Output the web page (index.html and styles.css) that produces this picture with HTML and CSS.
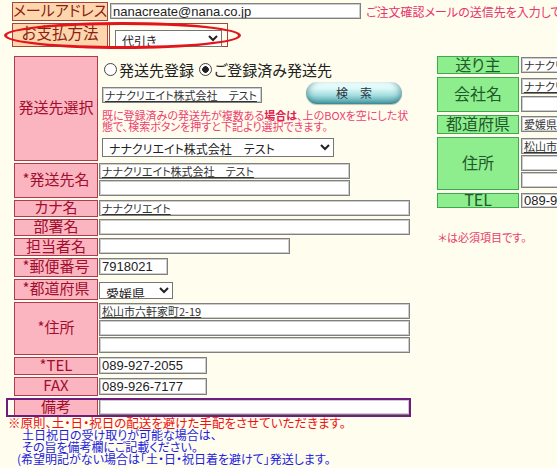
FILE: index.html
```html
<!DOCTYPE html>
<html lang="ja">
<head>
<meta charset="utf-8">
<title>ご注文情報入力</title>
<link rel="stylesheet" href="styles.css">
</head>
<body>
<div class="page">
  <div class="top">
    <div class="toprow r1">
      <div class="tlabel">メールアドレス</div>
      <input class="inp email" type="text" value="nanacreate@nana.co.jp">
      <span class="notice">ご注文確認メールの送信先を入力してください。</span>
    </div>
    <div class="toprow r2">
      <div class="tlabel tall">お支払方法</div>
      <div class="tcell"><select class="sel pay"><option>代引き</option></select></div>
      <div class="ellipse"></div>
    </div>
  </div>

  <div class="main">
    <div class="left">
      <div class="lgrid">
        <div class="plabel">発送先選択</div>
        <div class="cell choose">
          <div class="radios">
            <span class="radio"></span><span class="rtext">発送先登録</span>
            <span class="radio on"></span><span class="rtext">ご登録済み発送先</span>
          </div>
          <div class="searchrow">
            <input class="inp jp ul w160" type="text" value="ナナクリエイト株式会社　テスト">
            <button class="search" type="button">検　索</button>
          </div>
          <p class="hint">既に登録済みの発送先が複数ある<b>場合は</b>、上のBOXを空にした状<br>態で、検索ボタンを押すと下記より選択できます。</p>
          <select class="sel addr"><option>ナナクリエイト株式会社　テスト</option></select>
        </div>

        <div class="plabel">*発送先名</div>
        <div class="cell stack">
          <input class="inp jp ul w251" type="text" value="ナナクリエイト株式会社　テスト">
          <input class="inp w251" type="text" value="">
        </div>

        <div class="plabel">カナ名</div>
        <div class="cell"><input class="inp jp ul w311" type="text" value="ナナクリエイト"></div>

        <div class="plabel">部署名</div>
        <div class="cell"><input class="inp w311" type="text" value=""></div>

        <div class="plabel">担当者名</div>
        <div class="cell"><input class="inp w191" type="text" value=""></div>

        <div class="plabel">*郵便番号</div>
        <div class="cell"><input class="inp w69 h17" type="text" value="7918021"></div>

        <div class="plabel">*都道府県</div>
        <div class="cell"><select class="sel pref"><option>愛媛県</option></select></div>

        <div class="plabel">*住所</div>
        <div class="cell stack addrs">
          <input class="inp jp ul w311" type="text" value="松山市六軒家町2-19">
          <input class="inp w311" type="text" value="">
          <input class="inp w311" type="text" value="">
        </div>

        <div class="plabel">*TEL</div>
        <div class="cell"><input class="inp w108 h17" type="text" value="089-927-2055"></div>

        <div class="plabel">FAX</div>
        <div class="cell"><input class="inp w108 h17 mt1" type="text" value="089-926-7177"></div>
      </div>

      <div class="bikou">
        <div class="plabel">備考</div>
        <input class="inp w311" type="text" value="">
      </div>

      <div class="notes">
        <div class="red">※原則、土・日・祝日の配送を避けた手配をさせていただきます。</div>
        <div class="blue">土日祝日の受け取りが可能な場合は、</div>
        <div class="blue">その旨を備考欄にご記載ください。</div>
        <div class="blue paren">(希望明記がない場合は「土・日・祝日着を避けて」発送します。</div>
      </div>
    </div>

    <div class="right">
      <div class="rgrid">
        <div class="glabel">送り主</div>
        <div class="cell"><input class="inp jp w200 mt1" type="text" value="ナナクリエイト株式会社"></div>

        <div class="glabel">会社名</div>
        <div class="cell stack g2">
          <input class="inp jp ul w200 mt1" type="text" value="ナナクリエイト株式会社">
          <input class="inp w200" type="text" value="">
        </div>

        <div class="glabel">都道府県</div>
        <div class="cell"><input class="inp jp w200 mt1" type="text" value="愛媛県"></div>

        <div class="glabel">住所</div>
        <div class="cell stack g3">
          <input class="inp jp ul w200 mt1" type="text" value="松山市六軒家町2-19">
          <input class="inp w200" type="text" value="">
          <input class="inp w200" type="text" value="">
        </div>

        <div class="glabel">TEL</div>
        <div class="cell"><input class="inp w200 h15" type="text" value="089-927-2055"></div>
      </div>
      <p class="req">＊は必須項目です。</p>
    </div>
  </div>
</div>
</body>
</html>
```

FILE: styles.css
```css
html, body {
  margin: 0;
  padding: 0;
}
body {
  width: 557px;
  height: 468px;
  overflow: hidden;
  background: #fefdee;
  font-family: "Noto Sans CJK JP", "Liberation Sans", sans-serif;
  font-feature-settings: "palt";
  color: #222;
}
.page {
  width: 900px;
  position: relative;
}

/* ---------- top rows ---------- */
.top {
  padding: 2px 0 0 12px;
}
.toprow {
  display: flex;
  align-items: flex-start;
}
.r1 {
  height: 19px;
}
.r2 {
  margin-top: 2px;
  position: relative;
}
.tlabel {
  box-sizing: border-box;
  width: 96px;
  height: 19px;
  border: 1px solid #a8453a;
  background: #fdd6ae;
  color: #8a1f12;
  font-size: 15px;
  line-height: 1;
  display: flex;
  align-items: center;
  justify-content: center;
  padding-bottom: 4px;
  white-space: nowrap;
}
.tlabel.tall {
  height: 24px;
  font-size: 15.5px;
}
.tcell {
  box-sizing: border-box;
  width: 119px;
  height: 24px;
  margin-left: 1px;
  border: 1px solid #a8453a;
  padding: 3px 0 0 5px;
}
.ellipse {
  position: absolute;
  left: -8px;
  top: -1px;
  width: 237px;
  height: 27px;
  box-sizing: border-box;
  border: 3px solid #e4141c;
  border-radius: 50%;
  pointer-events: none;
}
.notice {
  margin-left: 5px;
  font-size: 12px;
  line-height: 19px;
  color: #e8336b;
  white-space: nowrap;
}

/* ---------- form controls ---------- */
.inp {
  box-sizing: border-box;
  height: 16px;
  margin: 0;
  padding: 0 2px;
  border: 1px solid #808080;
  box-shadow: inset 0 0 0 1px #cdcdcd;
  background: #fff;
  font-family: "Liberation Sans", "Noto Sans CJK JP", sans-serif;
  font-size: 13px;
  font-feature-settings: "palt";
  color: #222;
  outline: none;
  display: block;
}
.inp.jp {
  font-family: "Noto Sans CJK JP", sans-serif;
  font-size: 11px;
  color: #333;
}
.inp.ul {
  text-decoration: underline;
}
.email {
  width: 251px;
  margin: 1px 0 0 2px;
}
.w69 { width: 69px; }
.w108 { width: 108px; }
.w160 { width: 160px; }
.w191 { width: 191px; }
.w200 { width: 200px; }
.w251 { width: 251px; }
.w311 { width: 311px; }
.h15 { height: 15px; }
.h17 { height: 17px; }
.mt1 { margin-top: 1px; }

.sel {
  box-sizing: border-box;
  margin: 0;
  border: 1px solid #767676;
  border-radius: 0;
  background: #fff;
  color: #222;
  font-family: "Noto Sans CJK JP", sans-serif;
  font-feature-settings: "palt";
  font-size: 12px;
  padding: 0 2px;
}
.pay {
  width: 107px;
  height: 17px;
}
.addr {
  width: 232px;
  height: 19px;
  margin-top: 6px;
}
.pref {
  width: 74px;
  height: 17px;
  margin-top: 3px;
  font-size: 13px;
}

/* ---------- main area ---------- */
.main {
  display: flex;
  gap: 26px;
  margin-top: 9px;
  padding-left: 6px;
}
.left {
  width: 405px;
  position: relative;
}
.lgrid {
  margin-left: 8px;
  display: grid;
  grid-template-columns: 84px 312px;
  grid-template-rows: 105px 35px 17px 17px 18px 19px 21px 53px 18px 19px;
  column-gap: 1px;
  row-gap: 2px;
}
.plabel {
  box-sizing: border-box;
  border: 1px solid #b33a4c;
  background: #fab5c1;
  color: #a30d2d;
  font-size: 15px;
  display: flex;
  align-items: center;
  justify-content: center;
  padding-bottom: 4px;
  white-space: nowrap;
  line-height: 1;
}
.cell {
  display: flex;
  flex-direction: column;
  align-items: flex-start;
}
.stack {
  gap: 1px;
}
.addrs {
  gap: 1px;
  padding-top: 1px;
}

/* 発送先選択 */
.choose {
  padding-left: 3px;
}
.radios {
  display: flex;
  align-items: center;
  height: 18px;
  margin-top: 4px;
  padding-left: 2px;
  font-size: 15px;
  color: #222;
  white-space: nowrap;
}
.radio {
  box-sizing: border-box;
  width: 13px;
  height: 13px;
  border: 1px solid #444;
  border-radius: 50%;
  background: #fff;
  margin-right: 2px;
}
.radio.on {
  background: radial-gradient(circle, #222 0 3px, #fff 3.6px);
  margin-left: 5px;
}
.searchrow {
  display: flex;
  align-items: flex-end;
  margin-top: 4px;
  height: 22px;
}
.searchrow .inp {
  margin-bottom: 1px;
}
.search {
  box-sizing: border-box;
  width: 96px;
  height: 22px;
  margin: 0 0 0 44px;
  padding: 0;
  border: none;
  border-radius: 11px;
  background: linear-gradient(to bottom, #f4ffff 0%, #dcf8f8 30%, #a6dee0 60%, #5aaab2 90%, #3f8e97 100%);
  box-shadow: inset 6px 0 6px -4px rgba(20, 90, 100, 0.5), inset -6px 0 6px -4px rgba(20, 90, 100, 0.5), 0 1px 1px rgba(0, 0, 0, 0.25);
  font-family: "Noto Sans CJK JP", sans-serif;
  font-size: 12px;
  color: #2a3440;
  line-height: 22px;
}
.hint {
  margin: 6px 0 0;
  font-size: 11px;
  line-height: 11px;
  color: #ee3f6e;
  white-space: nowrap;
}
.hint b {
  color: #e02050;
}

/* 備考 row with purple frame */
.bikou {
  position: relative;
  display: flex;
  gap: 1px;
  margin: 2px 0 0 8px;
  height: 18px;
}
.bikou .plabel {
  width: 84px;
  height: 18px;
}
.bikou .inp {
  margin-top: 1px;
}
.bikou::after {
  content: "";
  position: absolute;
  left: -8px;
  top: 0;
  width: 405px;
  height: 19px;
  box-sizing: border-box;
  border: 2px solid #6e1d7c;
  pointer-events: none;
}

.notes {
  margin-top: 1px;
  font-size: 12.5px;
  line-height: 12px;
  white-space: nowrap;
}
.notes .red {
  color: #ee1111;
  padding-left: 2px;
}
.notes .blue {
  color: #1c1ce0;
  font-size: 12px;
  padding-left: 16px;
}
.notes .blue.paren {
  padding-left: 11px;
}

/* ---------- right (green) ---------- */
.rgrid {
  display: grid;
  grid-template-columns: 82px 200px;
  grid-template-rows: 18px 35px 19px 53px 15px;
  column-gap: 2px;
  row-gap: 3px;
}
.glabel {
  box-sizing: border-box;
  border: 1px solid #3ea94e;
  background: #8eee8e;
  color: #1e5a2a;
  font-size: 16px;
  line-height: 1;
  display: flex;
  align-items: center;
  justify-content: center;
  padding-bottom: 3px;
  white-space: nowrap;
}
.g2 {
  gap: 2px;
}
.g3 {
  gap: 1px;
}
.req {
  margin: 22px 0 0 1px;
  font-size: 11px;
  line-height: 14px;
  color: #e8406a;
}
```
